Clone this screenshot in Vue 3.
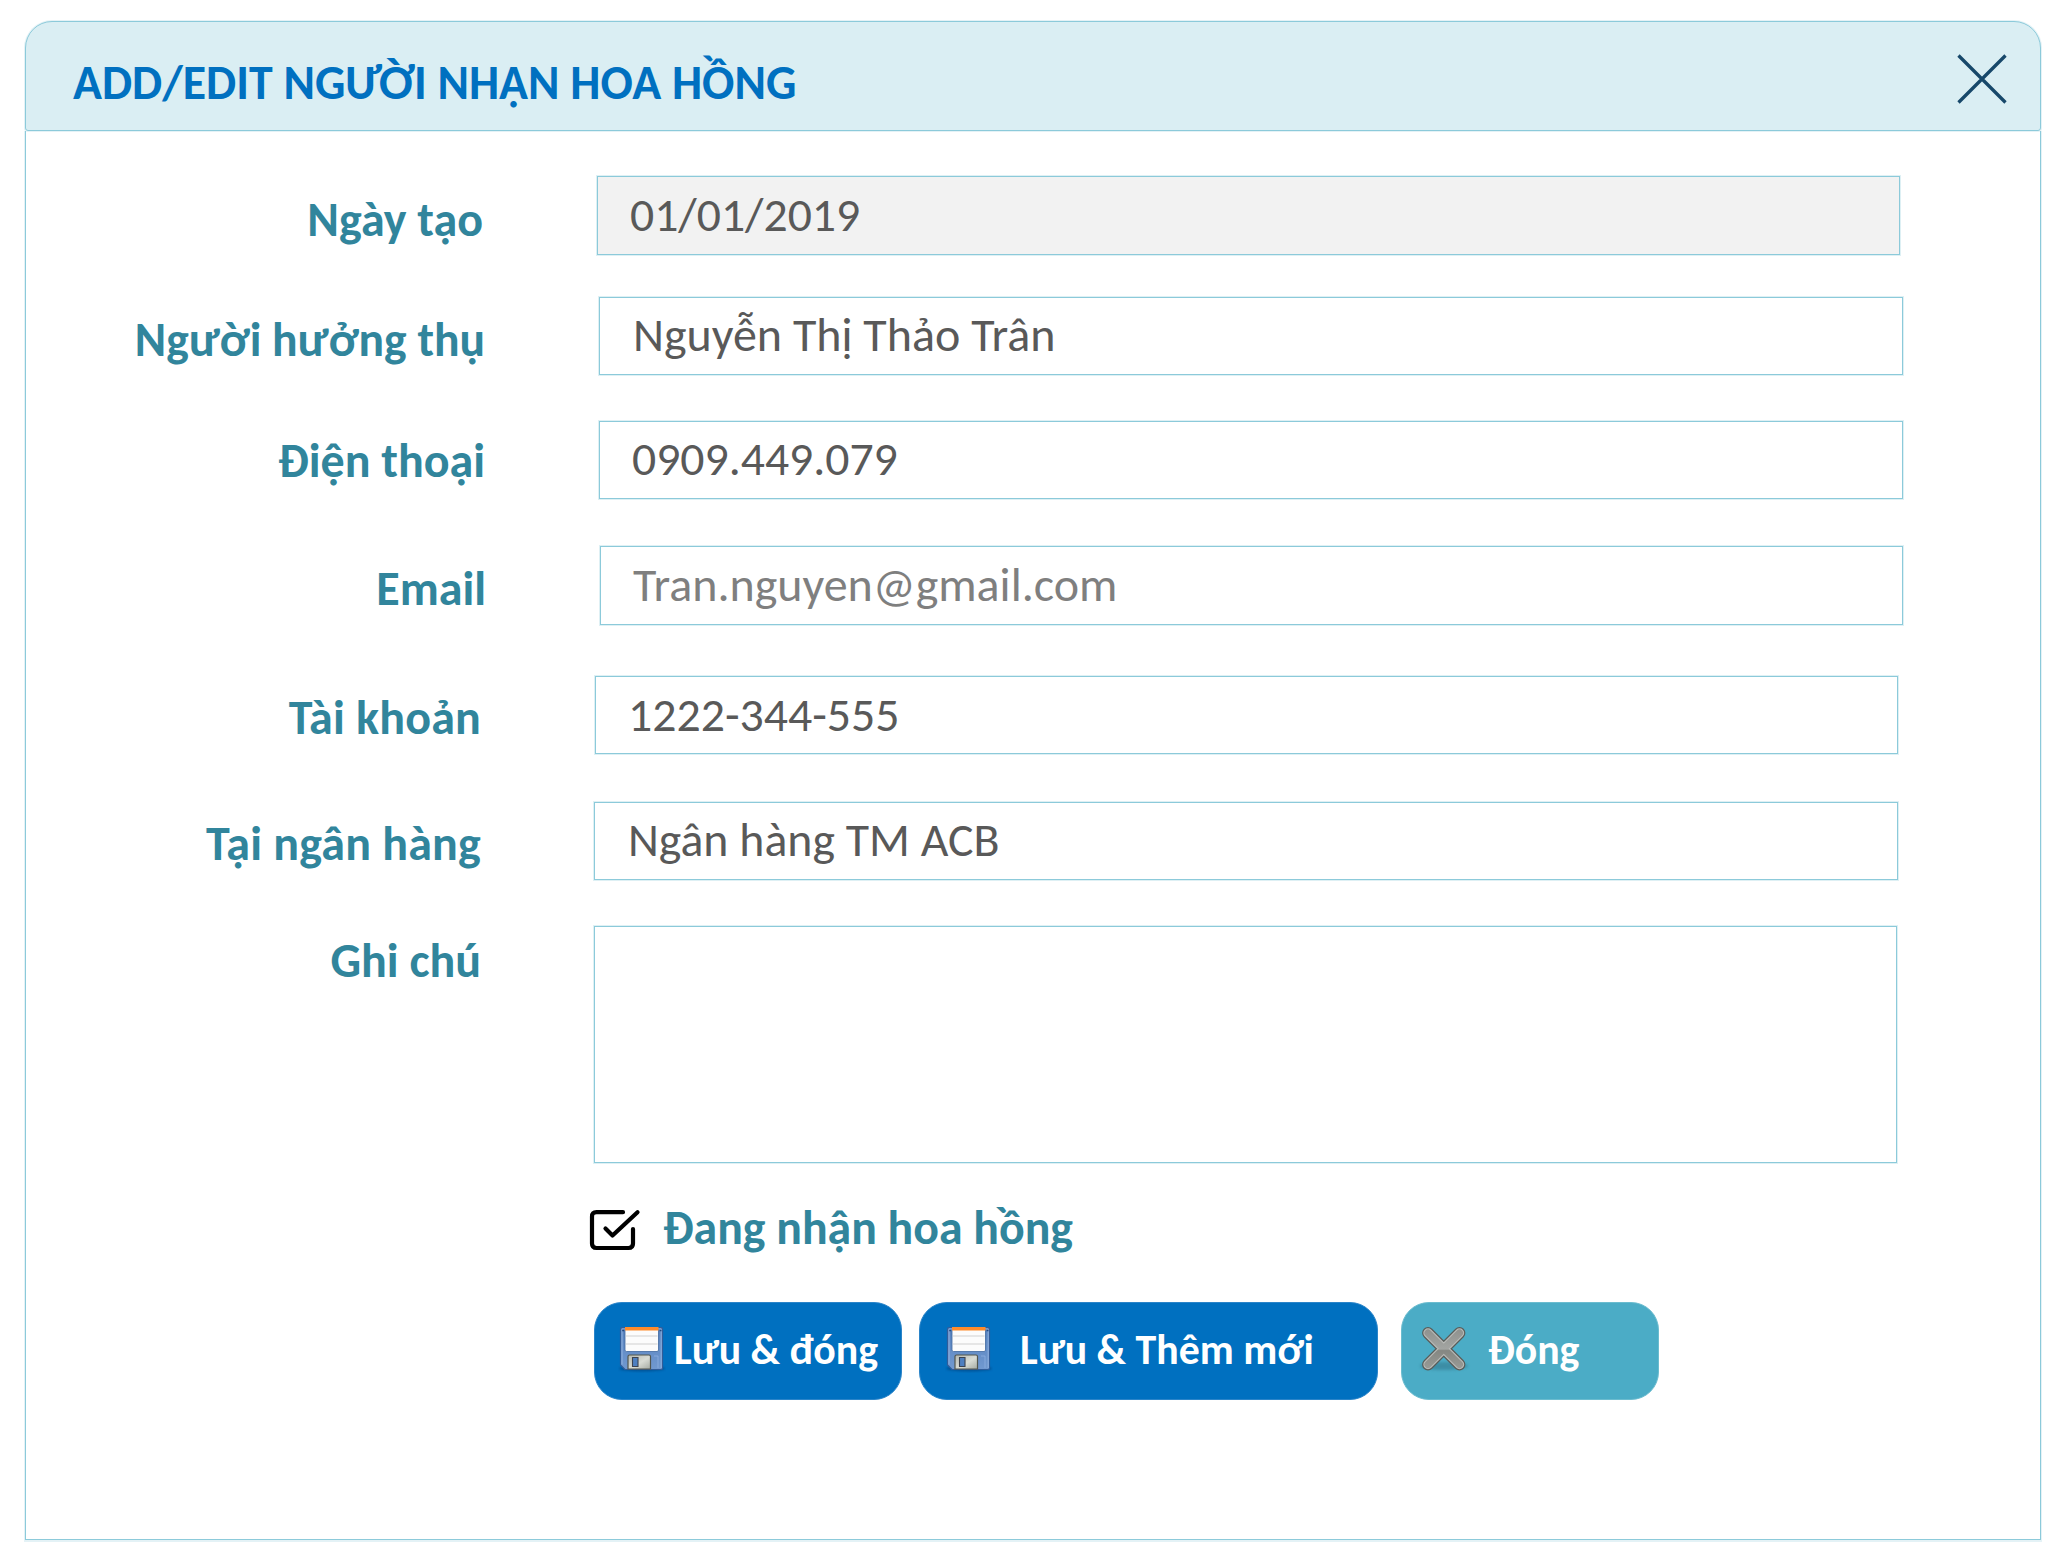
<script setup>
import { ref } from 'vue'

const rows = [
  { id: 'created', label: 'Ngày tạo', value: '01/01/2019' },
  { id: 'payee', label: 'Người hưởng thụ', value: 'Nguyễn Thị Thảo Trân' },
  { id: 'phone', label: 'Điện thoại', value: '0909.449.079' },
  { id: 'email', label: 'Email', value: 'Tran.nguyen@gmail.com' },
  { id: 'account', label: 'Tài khoản', value: '1222-344-555' },
  { id: 'bank', label: 'Tại ngân hàng', value: 'Ngân hàng TM ACB' },
  { id: 'note', label: 'Ghi chú', value: '' }
]

const saveButtons = [
  { id: 'save-close', text: 'Lưu & đóng' },
  { id: 'save-new', text: 'Lưu & Thêm mới' }
]

const receiving = ref(true)
</script>

<template>
  <main class="page">
    <section class="dialog">
      <header class="dialog-header">
        <h1 class="title">ADD/EDIT NGƯỜI NHẬN HOA HỒNG</h1>
        <svg class="close" viewBox="0 0 50 50" width="50" height="50">
          <path d="M1.500 1.500 48.500 48.500M48.500 1.500 1.500 48.500" fill="none" stroke="#17486a" stroke-width="3.300" />
        </svg>
      </header>

      <div class="dialog-body">
        <div v-for="row in rows" :key="row.id" class="row" :class="`row-${row.id}`">
          <span class="label">{{ row.label }}</span>
          <div class="field"><span class="value">{{ row.value }}</span></div>
        </div>

        <div class="check-row" @click="receiving = !receiving">
          <svg class="check" viewBox="0 0 52 42" width="52" height="42">
            <g fill="none" stroke="#000" stroke-width="4.200" stroke-linecap="round" stroke-linejoin="round">
              <path d="M34 3.200H7.500Q3 3.200 3 7.700V34.500Q3 39 7.500 39H39.500Q44 39 44 34.500V20" />
              <path v-if="receiving" d="M16.500 19.500 23.500 26.500 48.500 3.200" />
            </g>
          </svg>
          <span class="check-label">Đang nhận hoa hồng</span>
        </div>

        <div class="actions">
          <button v-for="b in saveButtons" :key="b.id" class="btn" :class="b.id" type="button">
            <svg class="disk" viewBox="0 0 48 48" width="48" height="48">
              <defs>
                <linearGradient :id="`${b.id}-body`" x1="0" y1="0" x2="0" y2="1">
                  <stop offset="0" stop-color="#5580bd" />
                  <stop offset="1" stop-color="#7199d0" />
                </linearGradient>
                <linearGradient :id="`${b.id}-metal`" x1="0" y1="0" x2="1" y2="1">
                  <stop offset="0" stop-color="#b4b8b0" />
                  <stop offset=".55" stop-color="#d9dcd5" />
                  <stop offset="1" stop-color="#a5aaa2" />
                </linearGradient>
                <filter :id="`${b.id}-soft`" x="-10%" y="-60%" width="120%" height="220%">
                  <feGaussianBlur stdDeviation="1.200" />
                </filter>
              </defs>
              <ellipse cx="24" cy="43.500" rx="23" ry="3" fill="#00386f" opacity=".5" :filter="`url(#${b.id}-soft)`" />
              <path d="M4 2.500H43Q44.500 2.500 44.500 4V43Q44.500 44.500 43 44.500H7L2.500 40V4Q2.500 2.500 4 2.500Z" :fill="`url(#${b.id}-body)`" stroke="#315c99" stroke-width="1.200" />
              <path d="M4 39.500V4H43.200V43" fill="none" stroke="#92b2df" stroke-width="1" />
              <path d="M7 4.500H40.500V25Q40.500 26.500 39 26.500H8.500Q7 26.500 7 25Z" fill="#fcfcfc" stroke="#3f689f" stroke-width=".8" />
              <path d="M7 2H40.500V5.500H7Z" fill="#ff8b2b" />
              <path d="M8 11H39.500M8 19H39.500" stroke="#dedede" stroke-width="1.700" />
              <path d="M4.200 5.500H6M41.700 5.500H43.500" stroke="#244a80" stroke-width="1.500" />
              <path d="M36 31H40V43" fill="none" stroke="#8eafe0" stroke-width=".8" />
              <path d="M10 44V31.500Q10 30 11.500 30H31Q32.500 30 32.500 31.500V44Z" :fill="`url(#${b.id}-metal)`" stroke="#52564f" stroke-width="1.200" />
              <path d="M14.500 32.500H20V41.500H14.500Z" fill="#4e7fc0" stroke="#3c4350" stroke-width="1.100" />
            </svg>
            <span class="btn-text">{{ b.text }}</span>
          </button>
          <button class="btn close-btn" type="button">
            <svg class="cross" viewBox="0 0 54 48" width="54" height="48">
              <defs>
                <linearGradient id="cross-fill" x1="0" y1="4" x2="0" y2="44" gradientUnits="userSpaceOnUse">
                  <stop offset="0" stop-color="#8f918e" />
                  <stop offset=".5" stop-color="#a3a5a2" />
                  <stop offset=".54" stop-color="#858782" />
                  <stop offset="1" stop-color="#999b97" />
                </linearGradient>
                <filter id="cross-soft" x="-10%" y="-60%" width="120%" height="220%">
                  <feGaussianBlur stdDeviation="1.800" />
                </filter>
              </defs>
              <ellipse cx="27" cy="41" rx="24" ry="4" fill="#24576a" opacity=".35" filter="url(#cross-soft)" />
              <g fill="none" stroke-linecap="round">
                <path d="M11 8 42.500 39.500M42.500 8 11 39.500" stroke="#595c59" stroke-width="11.800" />
                <path d="M11 8 42.500 39.500M42.500 8 11 39.500" stroke="#b9bbb8" stroke-width="9.400" />
                <path d="M11 8 42.500 39.500M42.500 8 11 39.500" stroke="url(#cross-fill)" stroke-width="7" />
              </g>
            </svg>
            <span class="btn-text">Đóng</span>
          </button>
        </div>
      </div>
    </section>
  </main>
</template>

<style>
body {
  margin: 0;
  background: #fff;
}
</style>

<style scoped>
.page {
  box-sizing: border-box;
  width: 2064px;
  height: 1566px;
  padding: 21px 23px 26px 25px;
  font-family: Carlito, Calibri, Lato, "Open Sans", sans-serif;
  font-size: 48px;
  line-height: 60px;
}
.dialog {
  display: flex;
  flex-direction: column;
  height: 1519px;
}
.dialog-header {
  box-sizing: border-box;
  display: flex;
  justify-content: space-between;
  height: 110px;
  padding: 31px 33px 0 47px;
  border: 1px solid #8ccada;
  border-radius: 27px 27px 3px 3px;
  background: #daeef3;
  box-shadow: 0 0 0 1px rgba(146, 205, 220, 0.25);
}
.title {
  margin: 0;
  color: #0070c0;
  font-size: 47.800px;
  font-weight: 700;
  line-height: 60px;
  white-space: nowrap;
}
.close {
  flex: none;
  margin-top: 1px;
}
.dialog-body {
  box-sizing: border-box;
  flex: 1;
  padding-top: 45px;
  border: solid #8ccada;
  border-width: 0 1px 1px;
  box-shadow: 0 1px 0 1px rgba(146, 205, 220, 0.25);
}
.row {
  display: flex;
  align-items: flex-start;
}
.label {
  flex: none;
  width: 459px;
  color: #31859c;
  font-weight: 700;
  text-align: right;
  white-space: nowrap;
}
.field {
  box-sizing: border-box;
  width: 1304px;
  height: 78px;
  margin-left: 114px;
  padding: 7px 0 0 32px;
  border: 1px solid #8ccada;
  color: #595959;
  white-space: nowrap;
  box-shadow: 0 0 0 1px rgba(146, 205, 220, 0.3);
}
.row-created .label { width: 457px; }
.row-created .label { padding-top: 14px; }
.row-created .field { width: 1303px; height: 79px; margin-left: 114px; padding-top: 8px; background: #f2f2f2; font-size: 47.700px; }
.row-payee { margin-top: 42px; }
.row-payee .label { padding-top: 13px; font-size: 47.600px; }
.row-payee .field { padding-left: 33px; }
.row-phone { margin-top: 46px; }
.row-phone .label { padding-top: 10px; }
.row-phone .field { font-size: 47.700px; }
.row-email { margin-top: 47px; }
.row-email .label { width: 460px; padding-top: 13px; }
.row-email .field { width: 1303px; height: 79px; margin-left: 114px; padding-top: 8px; color: #7f7f7f; }
.row-account { margin-top: 51px; }
.row-account .label { width: 455px; padding-top: 12px; letter-spacing: 0.200px; }
.row-account .field { width: 1303px; margin-left: 114px; padding-top: 8px; font-size: 47.800px; }
.row-bank { margin-top: 48px; }
.row-bank .label { width: 455px; padding-top: 12px; letter-spacing: 0.200px; }
.row-bank .field { margin-left: 113px; padding-left: 33px; font-size: 47.800px; }
.row-note { margin-top: 46px; }
.row-note .label { width: 455px; padding-top: 5px; }
.row-note .field { width: 1303px; height: 237px; margin-left: 113px; }
.check-row {
  display: flex;
  align-items: flex-start;
  margin: 35px 0 0 563px;
  color: #31859c;
  font-size: 47.800px;
  font-weight: 700;
}
.check {
  flex: none;
  margin-top: 11px;
}
.check-label {
  margin-left: 22px;
  white-space: nowrap;
}
.actions {
  display: flex;
  margin: 44px 0 0 568px;
}
.btn {
  box-sizing: border-box;
  display: flex;
  align-items: flex-start;
  height: 98px;
  margin: 0;
  padding: 21px 0 0 23px;
  border: 1px solid #2a84c9;
  border-radius: 28px;
  background: #0070c0;
  color: #fff;
  font: 700 41.800px/52px Carlito, Calibri, Lato, "Open Sans", sans-serif;
  white-space: nowrap;
}
.disk,
.cross {
  flex: none;
  margin-top: 1px;
}
.save-close { width: 308px; }
.save-close .btn-text { margin-left: 8px; }
.save-new { width: 459px; margin-left: 17px; padding-left: 25px; }
.save-new .btn-text { margin-left: 27px; }
.close-btn {
  width: 258px;
  margin-left: 23px;
  padding-left: 15px;
  border-color: #6bbccf;
  background: #4bacc6;
}
.close-btn .btn-text { margin-left: 17px; }
</style>
